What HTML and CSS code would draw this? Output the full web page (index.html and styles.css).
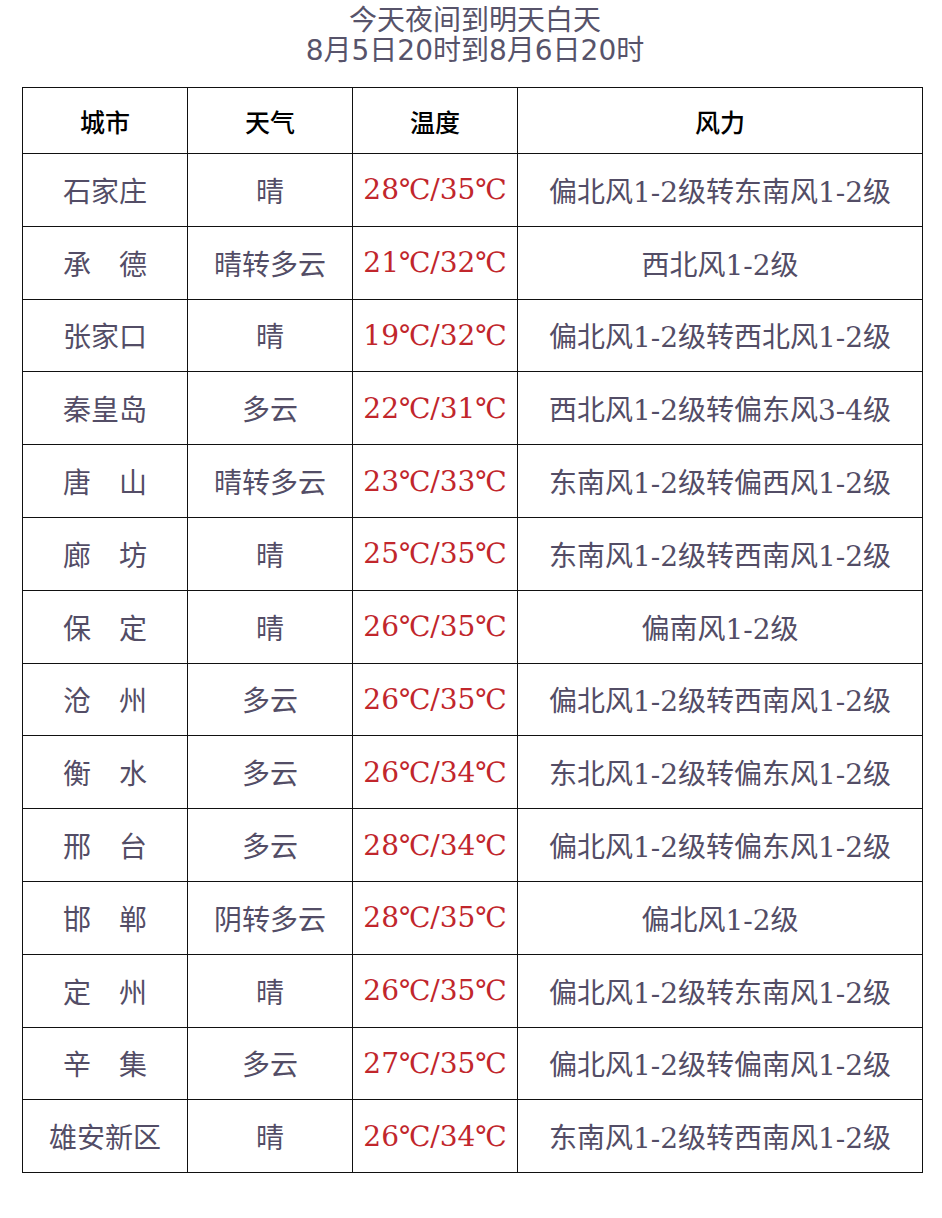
FILE: index.html
```html
<!DOCTYPE html>
<html lang="zh-CN">
<head>
<meta charset="utf-8">
<title>今天夜间到明天白天</title>
<link rel="stylesheet" href="styles.css">
</head>
<body>
<div class="page">
  <header class="title">
    <div class="title-line">今天夜间到明天白天</div>
    <div class="title-line">8月5日20时到8月6日20时</div>
  </header>
  <table class="forecast">
    <colgroup>
      <col class="c-city"><col class="c-wx"><col class="c-temp"><col class="c-wind">
    </colgroup>
    <thead>
      <tr><th>城市</th><th>天气</th><th>温度</th><th>风力</th></tr>
    </thead>
    <tbody>
      <tr><td>石家庄</td><td>晴</td><td class="temp">28℃/35℃</td><td>偏北风1-2级转东南风1-2级</td></tr>
      <tr><td>承　德</td><td>晴转多云</td><td class="temp">21℃/32℃</td><td>西北风1-2级</td></tr>
      <tr><td>张家口</td><td>晴</td><td class="temp">19℃/32℃</td><td>偏北风1-2级转西北风1-2级</td></tr>
      <tr><td>秦皇岛</td><td>多云</td><td class="temp">22℃/31℃</td><td>西北风1-2级转偏东风3-4级</td></tr>
      <tr><td>唐　山</td><td>晴转多云</td><td class="temp">23℃/33℃</td><td>东南风1-2级转偏西风1-2级</td></tr>
      <tr><td>廊　坊</td><td>晴</td><td class="temp">25℃/35℃</td><td>东南风1-2级转西南风1-2级</td></tr>
      <tr><td>保　定</td><td>晴</td><td class="temp">26℃/35℃</td><td>偏南风1-2级</td></tr>
      <tr><td>沧　州</td><td>多云</td><td class="temp">26℃/35℃</td><td>偏北风1-2级转西南风1-2级</td></tr>
      <tr><td>衡　水</td><td>多云</td><td class="temp">26℃/34℃</td><td>东北风1-2级转偏东风1-2级</td></tr>
      <tr><td>邢　台</td><td>多云</td><td class="temp">28℃/34℃</td><td>偏北风1-2级转偏东风1-2级</td></tr>
      <tr><td>邯　郸</td><td>阴转多云</td><td class="temp">28℃/35℃</td><td>偏北风1-2级</td></tr>
      <tr><td>定　州</td><td>晴</td><td class="temp">26℃/35℃</td><td>偏北风1-2级转东南风1-2级</td></tr>
      <tr><td>辛　集</td><td>多云</td><td class="temp">27℃/35℃</td><td>偏北风1-2级转偏南风1-2级</td></tr>
      <tr><td>雄安新区</td><td>晴</td><td class="temp">26℃/34℃</td><td>东南风1-2级转西南风1-2级</td></tr>
    </tbody>
  </table>
</div>
</body>
</html>
```
FILE: styles.css
```css
html, body {
  margin: 0;
  padding: 0;
  background: #ffffff;
}
.page {
  width: 942px;
  padding: 6px 0 0 0;
  box-sizing: border-box;
}
.title {
  text-align: center;
  color: #57536a;
  font-family: "DejaVu Sans", "Noto Sans CJK SC", sans-serif;
  font-size: 28px;
  margin: 0 0 21px 0;
}
.title-line {
  height: 30px;
  line-height: 30px;
  padding-left: 8px;
}
.forecast {
  margin-left: 22px;
  width: 900px;
  border-collapse: collapse;
  table-layout: fixed;
  font-family: "DejaVu Serif", "Noto Sans CJK SC", serif;
}
.c-city, .c-wx, .c-temp { width: 165px; }
.c-wind { width: 405px; }
.forecast th, .forecast td {
  border: 1px solid #111111;
  text-align: center;
  vertical-align: middle;
  padding: 0;
}
.forecast th {
  height: 65px;
  font-family: "Noto Sans CJK SC", sans-serif;
  font-weight: 500;
  font-size: 25px;
  color: #000000;
}
.forecast td {
  height: 71.8px;
  font-size: 28px;
  color: #534d66;
  white-space: nowrap;
}
.forecast td.temp {
  color: #c1262c;
}
```
